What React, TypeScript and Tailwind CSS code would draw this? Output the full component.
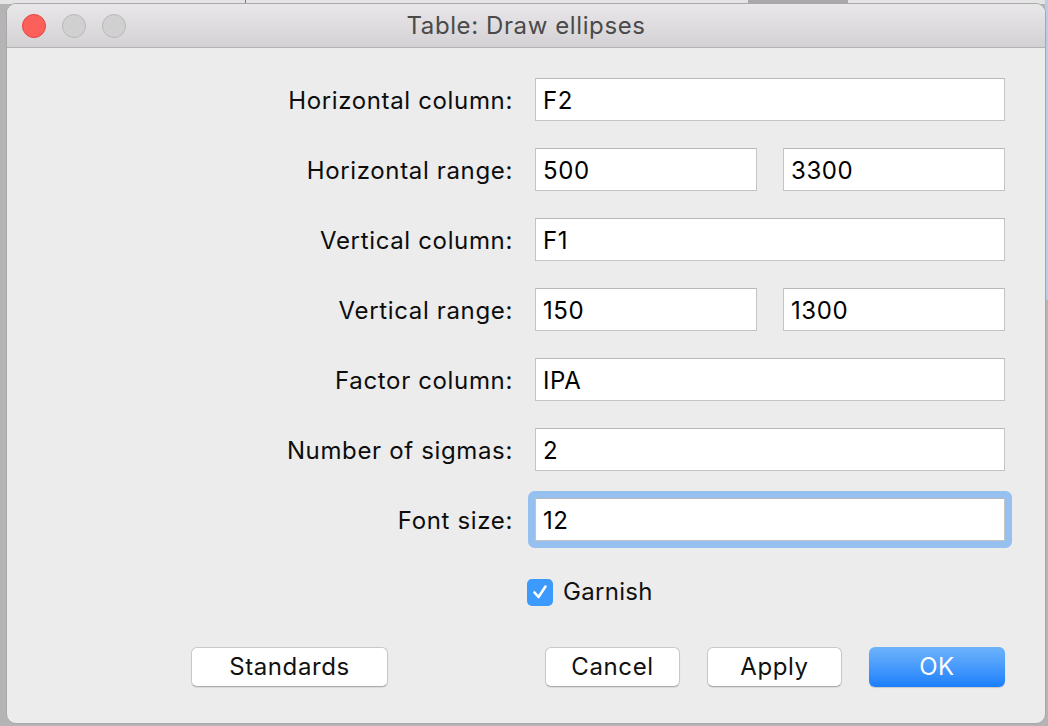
import React from 'react'

const font = { fontFamily: 'Inter, "Noto Sans", sans-serif' }

interface FieldProps {
  label: string
  values: string[]
  focused?: boolean
}

const Field = ({ label, values, focused }: FieldProps) => (
  <>
    <div className="flex h-[43px] items-center justify-end pt-[2px] text-[24px] tracking-[0.65px] text-[#0d0d0d]">{label}</div>
    <div className="flex h-[43px] gap-[26px]">
      {values.map((v, i) => (
        <div
          key={i}
          className={`flex flex-1 items-center border border-[#c4c4c4] border-t-[#b8b8b8] bg-white px-[7px] pt-[2px] text-[24px] tracking-[0.6px] text-black ${
            focused ? 'rounded-[2px] ring-[7px] ring-[#95c0ef]' : ''
          }`}
        >
          {v}
        </div>
      ))}
    </div>
  </>
)

const Btn = ({ children, w, primary }: { children: React.ReactNode; w: string; primary?: boolean }) => (
  <div
    className={`flex h-[40px] items-center justify-center rounded-[6px] text-[24px] tracking-[0.6px] ${w} ${
      primary
        ? 'bg-gradient-to-b from-[#6db3fb] to-[#177ffb] text-white shadow-[0_1px_1px_rgba(0,0,0,0.15)]'
        : 'border border-[#c8c8c8] border-b-[#acacac] bg-white text-[#111] shadow-[0_1px_1px_rgba(0,0,0,0.08)]'
    }`}
  >
    {children}
  </div>
)

export default function App() {
  return (
    <div className="relative h-[726px] w-[1048px] overflow-hidden bg-[#b4b4b4]" style={font}>
      {/* stuff behind the dialog */}
      <div className="absolute left-0 top-0 h-[4px] w-[1048px] bg-[#e4e4e4]" />
      <div className="absolute left-[245px] top-0 h-[4px] w-[1px] bg-[#777]" />
      <div className="absolute left-[748px] top-0 h-[4px] w-[100px] bg-[#a9a9a9]" />
      <div className="absolute right-0 top-0 h-[300px] w-[3px] bg-[#b9cde4]" />

      <div className="absolute left-[6px] top-[3px] flex h-[721px] w-[1040px] flex-col overflow-hidden rounded-[10px] border border-[#a8a8a8] bg-[#ececec]">
        {/* title bar */}
        <div className="relative flex h-[44px] shrink-0 items-center justify-center border-b border-[#b3b3b3] bg-gradient-to-b from-[#e9e7e9] to-[#d3d1d3]">
          <div className="absolute left-[15px] top-[10px] flex gap-[16px]">
            <div className="h-[24px] w-[24px] rounded-full border border-[#e2463f] bg-[#fc605b]" />
            <div className="h-[24px] w-[24px] rounded-full border border-[#b9b9b9] bg-[#d0d0d0]" />
            <div className="h-[24px] w-[24px] rounded-full border border-[#b9b9b9] bg-[#d0d0d0]" />
          </div>
          <span className="text-[24px] tracking-[0.6px] text-[#4a4a4a]">Table: Draw ellipses</span>
        </div>

        {/* form */}
        <div className="grid grid-cols-[1fr_470px] gap-x-[22px] gap-y-[27px] pl-[20px] pr-[40px] pt-[30px]">
          <Field label="Horizontal column:" values={['F2']} />
          <Field label="Horizontal range:" values={['500', '3300']} />
          <Field label="Vertical column:" values={['F1']} />
          <Field label="Vertical range:" values={['150', '1300']} />
          <Field label="Factor column:" values={['IPA']} />
          <Field label="Number of sigmas:" values={['2']} />
          <Field label="Font size:" values={['12']} focused />
        </div>

        {/* checkbox */}
        <div className="ml-[520px] mt-[33px] flex items-center gap-[10px]">
          <div className="flex h-[27px] w-[26px] items-center justify-center rounded-[5px] bg-[#3c9afc]">
            <svg width="18" height="18" viewBox="0 0 18 18" fill="none">
              <path d="M3.5 9.5 L7.5 14 L14.5 3.5" stroke="white" strokeWidth="2.6" strokeLinecap="round" strokeLinejoin="round" />
            </svg>
          </div>
          <span className="text-[24px] tracking-[0.3px] text-[#111]">Garnish</span>
        </div>

        {/* buttons */}
        <div className="mt-[37px] flex items-center pl-[184px] pr-[40px]">
          <Btn w="w-[197px]">Standards</Btn>
          <div className="flex-1" />
          <div className="flex gap-[27px]">
            <Btn w="w-[135px]">Cancel</Btn>
            <Btn w="w-[135px]">Apply</Btn>
            <Btn w="w-[136px]" primary>OK</Btn>
          </div>
        </div>
      </div>
    </div>
  )
}
